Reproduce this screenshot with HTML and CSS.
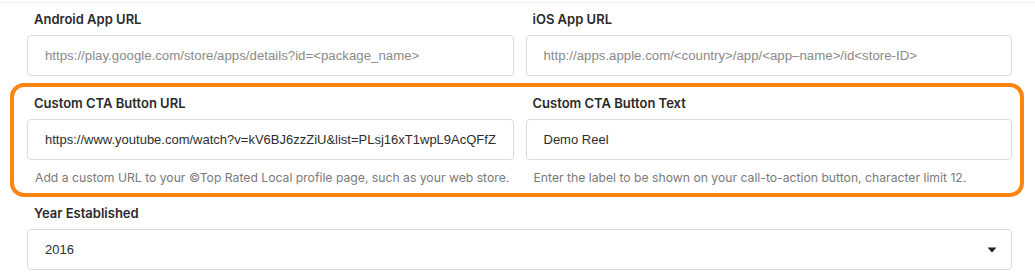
FILE: index.html
```html
<!DOCTYPE html>
<html lang="en">
<head>
  <meta charset="UTF-8">
  <meta name="viewport" content="width=device-width, initial-scale=1.0">
  <title>Profile Links</title>
  <link rel="stylesheet" href="styles.css">
</head>
<body>
  <div class="form">
    <div class="row">
      <div class="field">
        <label class="field-label" for="android-url">Android App URL</label>
        <input class="field-input" id="android-url" type="text" placeholder="https://play.google.com/store/apps/details?id=<package_name>">
      </div>
      <div class="field">
        <label class="field-label" for="ios-url">iOS App URL</label>
        <input class="field-input" id="ios-url" type="text" placeholder="http://apps.apple.com/<country>/app/<app–name>/id<store-ID>">
      </div>
    </div>

    <!-- highlighted CTA block -->
    <div class="row highlight">
      <div class="field">
        <label class="field-label" for="cta-url">Custom CTA Button URL</label>
        <input class="field-input" id="cta-url" type="text" value="https://www.youtube.com/watch?v=kV6BJ6zzZiU&amp;list=PLsj16xT1wpL9AcQFfZ">
        <div class="field-help">Add a custom URL to your ©Top Rated Local profile page, such as your web store.</div>
      </div>
      <div class="field">
        <label class="field-label" for="cta-text">Custom CTA Button Text</label>
        <input class="field-input" id="cta-text" type="text" value="Demo Reel">
        <div class="field-help">Enter the label to be shown on your call-to-action button, character limit 12.</div>
      </div>
    </div>

    <div class="field">
      <label class="field-label">Year Established</label>
      <div class="field-input select">
        <span>2016</span>
        <svg width="10" height="6" viewBox="0 0 10 6"><polygon points="0.5,0.5 9.5,0.5 5,5.5" fill="#222"/></svg>
      </div>
    </div>
  </div>
</body>
</html>
```

FILE: styles.css
```css
body {
  margin: 0;
  padding: 0;
  background-color: white;
  font-family: Inter, 'Noto Sans', sans-serif;
}
.form {
  margin-top: 2px;
  border-top: 1px solid #f0f0f0;
  padding: 6px 23px 0 27px;
}
.row {
  display: grid;
  grid-template-columns: minmax(0, 1fr) minmax(0, 1fr);
  column-gap: 12px;
}
.field {
  display: flex;
  flex-direction: column;
  min-width: 0;
}
.field-label {
  font-size: 13px;
  font-weight: 600;
  line-height: 20px;
  color: #2a2a2a;
  padding-left: 7px;
  margin-bottom: 6px;
}
.field-input {
  box-sizing: border-box;
  width: 100%;
  height: 41px;
  border: 1px solid #dcdcdc;
  border-radius: 4px;
  padding: 0 17px;
  font-family: 'Liberation Sans', Arial, sans-serif;
  font-size: 13px;
  color: #2d2d2d;
  background-color: white;
  outline: none;
}
.field-input::placeholder {
  color: #8a8a8a;
  font-size: 13.25px;
}
.field-help {
  margin-top: 9px;
  padding-left: 8px;
  font-size: 12.2px;
  line-height: 18px;
  color: #7a7a7a;
  white-space: nowrap;
}
.highlight {
  margin: 7px -12px 6px -17px;
  border: 4px solid #ff8412;
  border-radius: 14px;
  padding: 6px 8px 6px 13px;
}
.select {
  display: flex;
  align-items: center;
  justify-content: space-between;
  padding-right: 14px;
}
```
